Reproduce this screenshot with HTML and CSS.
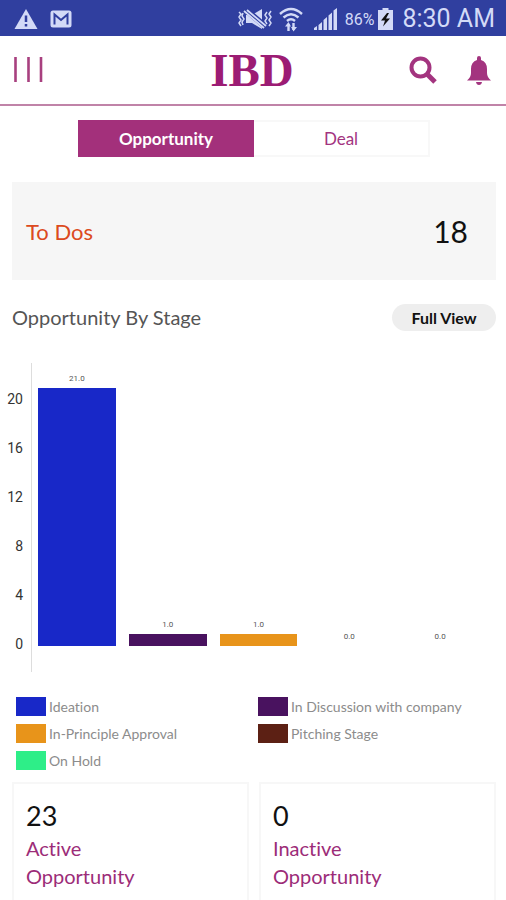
FILE: index.html
```html
<!DOCTYPE html>
<html lang="en">
<head>
<meta charset="utf-8">
<meta name="viewport" content="width=device-width, initial-scale=1">
<title>IBD</title>
<link rel="stylesheet" href="styles.css">
</head>
<body>
<div class="app">
  <div class="status">
    <div class="status-group status-left">
      <svg width="24" height="22" viewBox="0 0 24 22"><path d="M12 1 23.500 21H.5z" fill="currentColor"/><path d="M12 7.500v6.500M12 16v2.500" stroke="#303f9f" stroke-width="2.500"/></svg>
      <svg width="22" height="18" viewBox="0 0 22 18"><rect x=".5" y=".5" width="21" height="17" rx="2.500" fill="currentColor"/><path d="M4.500 14.500V4.500L11 10l6.500-5.500v10" fill="none" stroke="#303f9f" stroke-width="2"/></svg>
    </div>
    <div class="status-group">
      <svg class="mute" width="34" height="22" viewBox="0 0 34 22" fill="none" stroke="currentColor"><path d="M8 7h6l10-6v20l-10-6H8z" fill="currentColor" stroke="none"/><path d="M7 1l21 18" stroke="#303f9f" stroke-width="6"/><path d="M6 3l20 17M9 2l19 16" stroke-width="1.800"/><path d="M1 4l2 2-2 3 2 3-2 3 2 3M5 5l-1 3 2 3-2 3 1 3M29 4l-2 3 2 3-2 3 2 3M33 3l-2 3 2 3-2 3 2 3-2 3" stroke-width="1.500"/></svg>
      <svg class="wifi" width="24" height="26" viewBox="0 0 24 26" fill="none" stroke="currentColor" stroke-width="2.400"><path d="M1 8Q12-2 23 8M4.500 11.500q7.500-6.500 15 0M8 15q4-3.500 8 0"/><path d="M9.500 25v-7M14.500 17v7" stroke-width="2.400"/><path d="M6 20.500 9.500 16l2.500 4.500zM12 21h6L14.500 25.500z" fill="currentColor" stroke="none"/></svg>
      <svg class="signal" width="23" height="22" viewBox="0 0 23 22" fill="currentColor"><path d="M0 22v-2l3-2v4zM4.500 22v-5l3.500-3v8zM9.500 22V12l3.500-3v13zM14.500 22V7.500l3.500-3V22zM19.500 22V2.500L23 0v22z"/></svg>
      <span class="percent">86%</span>
      <svg class="battery" width="15" height="22" viewBox="0 0 15 22"><path d="M4.500 0h6v2H15v20H0V2h4.500z" fill="currentColor"/><path d="M9 5 3 12.500h4L5 18.500 12 10.500H8L11 5z" fill="#111"/></svg>
      <span class="clock">8:30 AM</span>
    </div>
  </div>

  <header class="header">
    <button class="icon-button" aria-label="Menu"><svg width="30" height="26" viewBox="0 0 30 26"><path d="M2.500 0v25M15.500 0v25M28 0v25" stroke="#a8407f" stroke-width="2.600"/></svg></button>
    <h1 class="brand">IBD</h1>
    <div class="actions">
      <button class="icon-button" aria-label="Search"><svg width="28" height="28" viewBox="0 0 28 28" fill="none" stroke="currentColor"><circle cx="11.500" cy="11.500" r="9" stroke-width="4"/><path d="m18 18 8 8" stroke-width="5"/></svg></button>
      <button class="icon-button" aria-label="Notifications"><svg width="24" height="29" viewBox="0 0 24 29" fill="currentColor"><path d="M10 4V2q0-2 2-2t2 2v2q6 2 6 9v4q0 4 4 7.500H0Q4 21 4 17v-4q0-7 6-9zM9 26h6q-.5 3-3 3t-3-3z"/></svg></button>
    </div>
  </header>

  <main class="main">
    <nav class="tabs">
      <button class="tab active">Opportunity</button>
      <button class="tab">Deal</button>
    </nav>

    <section class="todos"><span class="todos-label">To Dos</span><span class="todos-count">18</span></section>

    <div class="section-head">
      <h2 class="section-title">Opportunity By Stage</h2>
      <button class="pill">Full View</button>
    </div>

    <div class="chart">
      <div class="axis"><span>20</span><span>16</span><span>12</span><span>8</span><span>4</span><span>0</span></div>
      <div class="plot">
        <div class="column"><span class="value">21.0</span><div class="bar ideation" style="height: 91.3%"></div></div>
        <div class="column"><span class="value">1.0</span><div class="bar discussion" style="height: 4.35%"></div></div>
        <div class="column"><span class="value">1.0</span><div class="bar approval" style="height: 4.35%"></div></div>
        <div class="column"><span class="value">0.0</span><div class="bar pitching" style="height: 0%"></div></div>
        <div class="column"><span class="value">0.0</span><div class="bar hold" style="height: 0%"></div></div>
      </div>
    </div>

    <ul class="legend">
      <li><span class="swatch ideation"></span>Ideation</li>
      <li><span class="swatch discussion"></span>In Discussion with company</li>
      <li><span class="swatch approval"></span>In-Principle Approval</li>
      <li><span class="swatch pitching"></span>Pitching Stage</li>
      <li><span class="swatch hold"></span>On Hold</li>
    </ul>

    <section class="stats">
      <a class="stat" href="#active"><span class="stat-count">23</span><span>Active</span><span>Opportunity</span></a>
      <a class="stat" href="#inactive"><span class="stat-count">0</span><span>Inactive</span><span>Opportunity</span></a>
    </section>
  </main>
</div>
</body>
</html>
```
FILE: styles.css
```css
* { box-sizing: border-box; }

body {
  margin: 0;
  background: #fff;
  font-family: Lato, "Liberation Sans", sans-serif;
  font-variant-ligatures: none;
  color: #111;
}

button {
  margin: 0;
  padding: 0;
  border: 0;
  background: none;
  font: inherit;
  color: inherit;
}

svg { display: block; flex: none; }

.app {
  min-height: 100vh;
  display: flex;
  flex-direction: column;
}

.status {
  height: 36px;
  padding: 2px 11px 0 14px;
  display: flex;
  align-items: center;
  justify-content: space-between;
  background: #303f9f;
  color: #d3daf7;
  font-family: Roboto, sans-serif;
}

.status-group { display: flex; align-items: center; }
.status-left { gap: 12px; }
.wifi { margin: 0 11px 0 7px; }
.percent { margin: 0 4px 0 8px; font-size: 16px; }
.battery { margin-right: 9px; }
.clock { font-size: 25px; line-height: 34px; }

.header {
  height: 70px;
  padding: 0 15px 0 13px;
  display: grid;
  grid-template-columns: 1fr auto 1fr;
  align-items: center;
  border-bottom: 2px solid #c083a8;
  color: #a3347f;
}

.icon-button { justify-self: start; }

.brand {
  margin: 0;
  font: 700 47px/60px "Liberation Serif", serif;
  color: #9c1c74;
}

.actions {
  display: flex;
  align-items: center;
  justify-content: flex-end;
  gap: 30px;
}

.main {
  flex: 1;
  padding: 0 10px 0 12px;
  display: flex;
  flex-direction: column;
}

.tabs {
  height: 37px;
  margin: 14px 66px 25px;
  display: grid;
  grid-template-columns: 1fr 1fr;
}

.tab {
  border: 2px solid #f8f8f8;
  border-left: 0;
  font-size: 17px;
  color: #a3347f;
}

.tab.active {
  border: 0;
  background: #a3307b;
  color: #fff;
  font-weight: 700;
}

.todos {
  height: 98px;
  padding: 0 28px 0 14px;
  display: flex;
  align-items: center;
  justify-content: space-between;
  background: #f6f6f6;
}

.todos-label { font-size: 22px; color: #dc4a20; }
.todos-count { font-size: 30px; }

.section-head {
  margin: 23px 0 32px;
  display: flex;
  align-items: center;
  justify-content: space-between;
}

.section-title { margin: 0; font-size: 20px; line-height: 28px; font-weight: 400; color: #555; }

.pill {
  width: 104px;
  height: 27px;
  border-radius: 14px;
  background: #eee;
  font-size: 16px;
  font-weight: 700;
}

.chart {
  height: 309px;
  margin: 0 10px 0 -12px;
  display: flex;
}

.axis {
  width: 31px;
  padding: 12px 8px 0 0;
  display: flex;
  flex-direction: column;
  text-align: right;
  font-size: 14px;
  line-height: 49px;
  font-family: Roboto, sans-serif;
  color: #333;
}

.plot {
  flex: 1;
  padding-bottom: 26px;
  display: grid;
  grid-template-columns: repeat(5, 1fr);
  border-left: 1px solid #ddd;
}

.column {
  height: 100%;
  padding: 0 7px 0 6px;
  display: flex;
  flex-direction: column;
  justify-content: flex-end;
}

.value {
  padding-bottom: 4px;
  font: 8px/10px Roboto, sans-serif;
  text-align: center;
  color: #555;
}

.bar { flex: none; }
.ideation { background: #1828c8; }
.discussion { background: #49125f; }
.approval { background: #e8941a; }
.pitching { background: #5c2014; }
.hold { background: #2eee88; }

.legend {
  margin: 21px 0 8px;
  padding: 0 0 0 4px;
  display: grid;
  grid-template-columns: 1fr 1fr;
  column-gap: 4px;
  list-style: none;
  font-size: 14px;
  line-height: 27px;
  color: #8c8c8c;
}

.legend li { display: flex; align-items: center; gap: 3px; }
.swatch { width: 30px; height: 19px; }

.stats {
  flex: 1;
  display: grid;
  grid-template-columns: 1fr 1fr;
  gap: 10px;
}

.stat {
  padding: 14px 12px 0;
  display: flex;
  flex-direction: column;
  border: 2px solid #f7f7f7;
  border-bottom: 0;
  font-size: 20px;
  line-height: 28px;
  color: #9c2c78;
  text-decoration: none;
}

.stat-count { font-size: 27px; line-height: 36px; color: #111; }
```
